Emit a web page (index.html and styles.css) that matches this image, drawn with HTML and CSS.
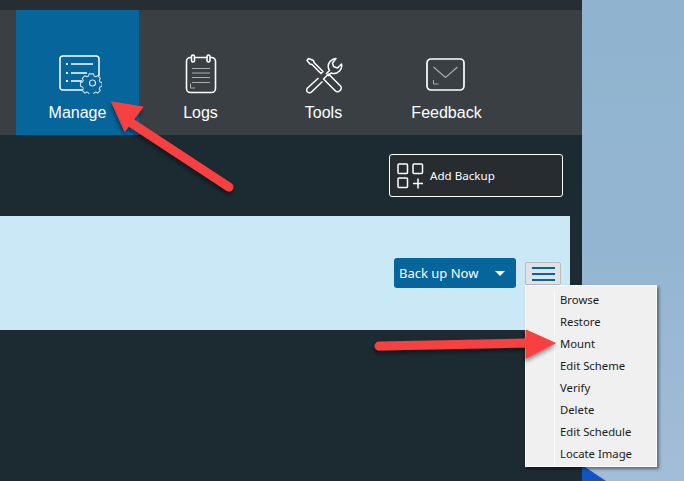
FILE: index.html
```html
<!DOCTYPE html>
<html lang="en">
<head>
<meta charset="utf-8">
<title>Backup manager</title>
<link rel="stylesheet" href="styles.css">
</head>
<body>
<div class="screen">
  <div class="app">
    <div class="topbar"></div>
    <nav class="nav">
      <div class="tab tab-active">
        <svg class="tab-icon" width="48" height="40" viewBox="0 0 48 40" fill="none" stroke="#fff" stroke-width="1.500">
          <path d="M29 36H9a3 3 0 0 1-3-3V5a3 3 0 0 1 3-3h33a3 3 0 0 1 3 3v17"/>
          <path d="M12 10h2M12 19h2M12 27h2" stroke-width="1.800"/>
          <path d="M17 10h22M17 19h16M17 27h11"/>
          <g stroke="#cfe4f1" stroke-width="1.200" stroke-linejoin="round">
            <path d="M36 19.500h5l.6 2.400 2 .9 2.200-1.200 3 3-1.200 2.100.8 2 2.400.7v4.200l-2.400.7-.8 2 1.200 2.100-3 3-2.200-1.200-2 .9-.6 2.300h-5l-.6-2.300-2-.9-2.200 1.200-3-3 1.200-2.100-.8-2-2.400-.7v-4.200l2.400-.7.8-2-1.200-2.100 3-3 2.200 1.200 2-.9z" transform="translate(3.400 2.700) scale(.88)"/>
            <circle cx="38.500" cy="29" r="3"/>
          </g>
        </svg>
        <span class="tab-label">Manage</span>
      </div>
      <div class="tab">
        <svg class="tab-icon" width="32" height="40" viewBox="0 0 32 40" fill="none" stroke="#fff" stroke-width="1.600">
          <rect x="1.500" y="3.500" width="29" height="35" rx="4"/>
          <rect x="6.500" y="1" width="3" height="7" rx="1.500" fill="#3a3f43"/>
          <rect x="22" y="1" width="3" height="7" rx="1.500" fill="#3a3f43"/>
          <path d="M7 14.500h18M7 19h18M7 23.500h18M7 28.500h18" stroke="#a9adb0" stroke-width="1"/>
          <path d="M5.500 29.500v4.500h4.500" stroke="#a9adb0" stroke-width="1"/>
        </svg>
        <span class="tab-label">Logs</span>
      </div>
      <div class="tab">
        <svg class="tab-icon" width="38" height="40" viewBox="0 0 38 40" fill="none" stroke="#fff" stroke-width="1.500" stroke-linejoin="round">
          <path d="M3.500 4.500l-1.500 2 3 3.500 2 .5 9 9 2-2-9-9-.5-2z"/>
          <path d="M23.500 20l12 12a2.800 2.800 0 0 1 0 4l-1 1a2.800 2.800 0 0 1-4 0l-12-12z"/>
          <path d="M13.500 24L2.500 34a2.800 2.800 0 0 0 0 4 2.800 2.800 0 0 0 4 0l11-10.500"/>
          <path d="M21 20l3.500-3.500a8 8 0 0 1 .5-9c2-2 4-3 6-3l-3.500 4.500 1 3.500 4 1.500 4-4c.6 2.500 0 5-2 7a8 8 0 0 1-8.500 2l-3 3"/>
        </svg>
        <span class="tab-label">Tools</span>
      </div>
      <div class="tab">
        <svg class="tab-icon" width="42" height="40" viewBox="0 0 42 40" fill="none" stroke="#fff" stroke-width="1.700">
          <rect x="1" y="5" width="37" height="31" rx="4"/>
          <path d="M7.500 13l12 10.500L31.500 13" stroke="#a9adb0" stroke-width="1.100"/>
          <path d="M7.500 26v4h5" stroke="#a9adb0" stroke-width="1"/>
        </svg>
        <span class="tab-label">Feedback</span>
      </div>
    </nav>
    <main class="content">
      <div class="actions">
        <button class="add-backup">
          <svg width="27" height="26" viewBox="0 0 27 26" fill="none" stroke="#fff" stroke-width="1.500">
            <rect x="1" y="1" width="9.500" height="9.500" rx="1"/>
            <rect x="16" y="1" width="9.500" height="9.500" rx="1"/>
            <rect x="1" y="15" width="9.500" height="9.500" rx="1"/>
            <path d="M16 20.500h10M21 15.500v10"/>
          </svg>
          <span>Add Backup</span>
        </button>
      </div>
      <section class="panel">
        <button class="backup-now"><span>Back up Now</span><i class="caret"></i></button>
        <button class="hamburger"><i></i><i></i><i></i></button>
      </section>
    </main>
  </div>
  <div class="desktop"><div class="desktop-corner"></div></div>

  <ul class="menu">
    <li>Browse</li>
    <li>Restore</li>
    <li>Mount</li>
    <li>Edit Scheme</li>
    <li>Verify</li>
    <li>Delete</li>
    <li>Edit Schedule</li>
    <li>Locate Image</li>
  </ul>

  <svg class="arrows" width="684" height="481" viewBox="0 0 684 481">
    <defs>
      <filter id="soft" x="-20%" y="-20%" width="140%" height="140%">
        <feDropShadow dx="-1" dy="3" stdDeviation="2" flood-color="#000" flood-opacity=".45"/>
      </filter>
    </defs>
    <g filter="url(#soft)" fill="#f8403f" stroke="#f8403f" stroke-linecap="round" stroke-linejoin="round">
      <path d="M229 187L130 122" stroke-width="9" fill="none"/>
      <path d="M112 102L143 107L125 131Z" stroke-width="1"/>
      <path d="M379 346L528 343" stroke-width="9" fill="none"/>
      <path d="M555 343L526 330V358Z" stroke-width="1"/>
    </g>
  </svg>
</div>
</body>
</html>
```
FILE: styles.css
```css
* { box-sizing: border-box; }
html, body { margin: 0; padding: 0; }
body { width: 684px; height: 481px; overflow: hidden; font-family: "Liberation Sans", Arial, sans-serif; }
button { font: inherit; padding: 0; cursor: pointer; }

.screen { position: relative; display: flex; width: 684px; height: 481px; overflow: hidden; }

.app { width: 582px; height: 100%; display: flex; flex-direction: column; background: #1c2a32; }
.topbar { height: 10px; background: #272e33; }

.nav { height: 125px; display: flex; padding-left: 16px; padding-top: 44px; background: #3a3f43; }
.tab { width: 123px; margin-top: -44px; padding-top: 44px; display: flex; flex-direction: column; align-items: center; color: #fff; }
.tab-active { background: #06659b; }
.tab-icon { flex: none; }
.tab-label { font-size: 16px; line-height: 18px; margin-top: 10px; }

.content { flex: 1; display: flex; flex-direction: column; }
.actions { height: 81px; padding: 19px 19px 0 0; display: flex; justify-content: flex-end; }
.add-backup { width: 174px; height: 43px; display: flex; align-items: center; gap: 6px; padding-left: 7px; background: #262c30; border: 1px solid #fff; border-radius: 3px; color: #fff; font-family: "Noto Sans", sans-serif; font-size: 11.600px; }

.panel { width: 570px; height: 114px; padding: 42px 9px 0 0; display: flex; align-items: flex-start; justify-content: flex-end; gap: 9px; background: #cbe8f6; }
.backup-now { width: 122px; height: 30px; display: flex; align-items: center; gap: 17px; padding-left: 5px; background: #06659b; border: 0; border-radius: 3px; color: #fff; font-family: "Noto Sans", sans-serif; font-size: 13px; }
.caret { width: 0; height: 0; border-left: 5px solid transparent; border-right: 5px solid transparent; border-top: 5px solid #fff; }
.hamburger { width: 36px; height: 23px; margin-top: 4px; display: flex; flex-direction: column; align-items: center; justify-content: center; gap: 4px; background: #dfe3e6; border: 1px solid #b9bdc0; border-radius: 2px; }
.hamburger i { width: 23px; height: 2px; background: #06659b; }

.desktop { flex: 1; position: relative; background: linear-gradient(180deg, #90b4cf 0%, #93b5d1 50%, #a2bdd7 100%); }
.desktop-corner { position: absolute; left: 0; bottom: 0; width: 24px; height: 16px; background: #1353c4; clip-path: polygon(0 0, 100% 100%, 0 100%); }

.menu { position: absolute; left: 525px; top: 285px; width: 132px; height: 182px; margin: 0; padding: 4px 2px 2px 28px; list-style: none; background: #f0f0f0; border: 1px solid #fff; box-shadow: 2px 2px 3px rgba(0,0,0,.45); font-family: "Noto Sans", sans-serif; font-size: 11.300px; color: #1a1a1a; }
.menu li { height: 22px; line-height: 20px; padding-left: 5px; border-left: 1px solid #fafafa; }

.arrows { position: absolute; left: 0; top: 0; pointer-events: none; }
```
